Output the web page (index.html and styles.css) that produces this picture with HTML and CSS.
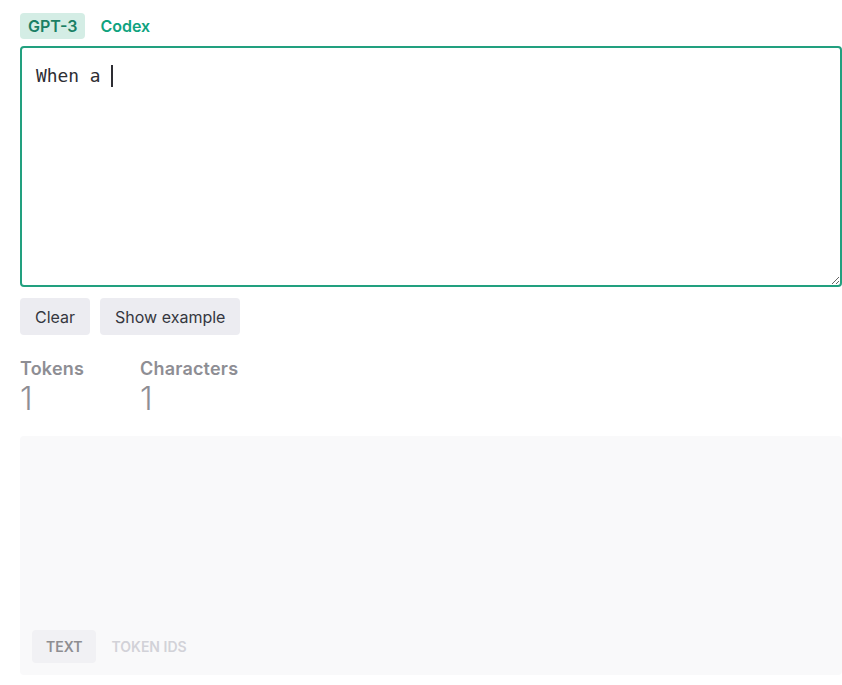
FILE: index.html
```html
<!DOCTYPE html>
<html>
<head>
<meta charset="utf-8">
<link rel="stylesheet" href="styles.css">
</head>
<body>
<div class="page">
  <div class="model-tabs">
    <span class="model-tab active">GPT-3</span>
    <span class="model-tab">Codex</span>
  </div>
  <div class="prompt-wrap">
    <textarea class="prompt" spellcheck="false">When a </textarea>
    <span class="caret"></span>
  </div>
  <div class="actions">
    <button class="btn">Clear</button>
    <button class="btn">Show example</button>
  </div>
  <div class="stats">
    <div class="stat stat-tokens">
      <div class="stat-label">Tokens</div>
      <div class="stat-value">1</div>
    </div>
    <div class="stat">
      <div class="stat-label">Characters</div>
      <div class="stat-value">1</div>
    </div>
  </div>
  <div class="output">
    <div class="output-body"></div>
    <div class="view-tabs">
      <span class="view-tab active">TEXT</span>
      <span class="view-tab">TOKEN IDS</span>
    </div>
  </div>
</div>
</body>
</html>
```

FILE: styles.css
```css
html, body {
  margin: 0;
  padding: 0;
  background: #ffffff;
  overflow: hidden;
}
body {
  font-family: Inter, "Noto Sans", sans-serif;
  color: #353740;
}
.page {
  width: 822px;
  padding: 13px 0 0 20px;
}
.model-tabs {
  display: flex;
  gap: 7px;
  height: 26px;
  align-items: center;
}
.model-tab {
  font-size: 16px;
  font-weight: 600;
  color: #10a37f;
  padding: 0 8px;
  line-height: 26px;
  border-radius: 4px;
}
.model-tab.active {
  background: #d4ede5;
  color: #1a7f64;
}
.prompt-wrap {
  position: relative;
  margin-top: 7px;
}
.prompt {
  display: block;
  box-sizing: border-box;
  width: 822px;
  height: 241px;
  border: 2px solid #22a07f;
  border-radius: 4px;
  padding: 15px 14px 13px;
  font-family: "DejaVu Sans Mono", "Liberation Mono", monospace;
  font-size: 17.9px;
  line-height: 26px;
  color: #2d2d33;
  outline: none;
  resize: vertical;
}
.caret {
  position: absolute;
  left: 91px;
  top: 19px;
  width: 1.5px;
  height: 22px;
  background: #2d2d33;
}
.actions {
  display: flex;
  gap: 10px;
  margin-top: 11px;
}
.btn {
  font-family: Inter, "Noto Sans", sans-serif;
  font-size: 16px;
  color: #353740;
  background: #ececf1;
  border: none;
  border-radius: 4px;
  height: 37px;
  padding: 0 15px;
}
.stats {
  display: flex;
  margin-top: 22px;
}
.stat-tokens {
  width: 120px;
}
.stat-label {
  font-size: 18px;
  font-weight: 600;
  color: #8e8e94;
  line-height: 24px;
  letter-spacing: 0.2px;
}
.stat-value {
  font-size: 32px;
  font-weight: 300;
  color: #8e8e94;
  line-height: 36px;
}
.output {
  margin-top: 19px;
  height: 239px;
  background: #f9f9fa;
  border-radius: 4px;
  display: flex;
  flex-direction: column;
  padding: 0 12px 12px;
  box-sizing: border-box;
}
.output-body {
  flex: 1;
}
.view-tabs {
  display: flex;
  gap: 1px;
}
.view-tab {
  font-size: 14px;
  font-weight: 600;
  color: #d2d2d8;
  padding: 0 14px;
  line-height: 33px;
  border-radius: 4px;
}
.view-tab.active {
  background: #f1f1f4;
  color: #8e8e92;
}
```
